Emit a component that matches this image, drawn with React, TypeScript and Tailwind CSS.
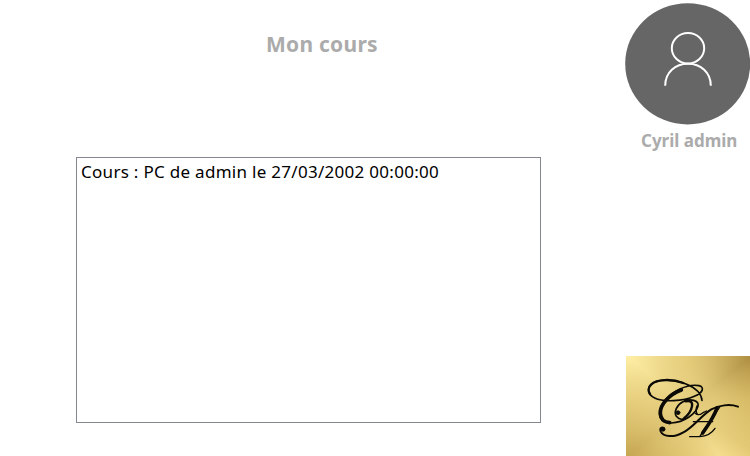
function UserIcon() {
  return (
    <svg className="block h-[125px] w-[130px] shrink-0" viewBox="0 0 130 125" aria-hidden="true">
      <ellipse cx="67.7" cy="63.8" rx="62.5" ry="60.6" fill="#666666" />
      <g fill="none" stroke="#ffffff" strokeWidth="2">
        <ellipse cx="68" cy="48.3" rx="16.2" ry="15.2" />
        <path d="M45.2 85.7C45.2 72.7 55.2 63.7 68 63.7S90.8 72.7 90.8 85.7" />
      </g>
    </svg>
  );
}

function Monogram() {
  return (
    <svg
      className="block h-[100px] w-[124px]"
      viewBox="18 18 372 300"
      preserveAspectRatio="none"
      fill="none"
      stroke="#0c0a06"
      strokeLinecap="round"
      strokeLinejoin="round"
      aria-hidden="true"
    >
      <path strokeWidth="5" d="M246 151C244 132 228 114 198 102C165 88 118 86 96 101C80 113 83 134 104 144C130 157 190 154 223 139C250 128 254 111 237 107C205 100 152 124 130 158C107 194 121 221 154 219C193 217 227 192 234 169C238 150 210 145 189 155C170 164 161 187 169 199Q181 214 196 204" />
      <path strokeWidth="7" d="M190 99C156 86 110 87 94 103C84 112 84 124 90 132" />
      <path strokeWidth="11" d="M184 120C149 133 119 163 121 190C122 207 133 217 149 218" />
      <path strokeWidth="7" d="M197 154Q219 149 216 169Q212 190 193 204" />
      <circle cx="174" cy="188" r="6" fill="#0c0a06" strokeWidth="2" />
      <path strokeWidth="6" d="M354 170C329 161 296 166 274 178C244 196 220 232 190 247C161 264 130 261 122 244C117 232 130 229 133 237" />
      <circle cx="129" cy="238" r="7" fill="#0c0a06" stroke="none" />
      <path strokeWidth="11" d="M291 174C283 198 265 225 248 249" />
      <path strokeWidth="4" d="M209 260H239Q270 258 285 235M239 260L300 170M220 215H278M226 190Q235 199 249 188L260 183M231 167Q225 181 232 192" />
    </svg>
  );
}

export default function App() {
  return (
    <main className="flex h-[456px] w-[750px] overflow-hidden bg-white font-['Noto_Sans',sans-serif]">
      <section className="flex w-[620px] shrink-0 flex-col pl-[76px]">
        <h1 className="mt-8 ml-[190px] h-6 w-[112px] whitespace-nowrap text-[21px] leading-6 font-bold tracking-[0.25px] text-[#ababab]">
          Mon cours
        </h1>
        <div className="mt-[101px] h-[266px] w-[465px] border border-[#828790] pt-[3px] pl-[4px]">
          <p className="whitespace-nowrap text-[17px] leading-[22px] tracking-[0.29px] text-black">
            Cours : PC de admin le 27/03/2002 00:00:00
          </p>
        </div>
      </section>
      <aside className="flex w-[130px] shrink-0 flex-col">
        <UserIcon />
        <p className="mt-[5px] ml-[21px] whitespace-nowrap text-[17px] leading-[22px] font-bold text-[#ababab]">
          Cyril admin
        </p>
        <div className="mt-auto ml-1.5 h-[100px] w-[124px] bg-[radial-gradient(circle_at_50%_50%,#e6cf80_0%,#e6cf80cc_35%,#e6cf8000_100%),conic-gradient(from_0deg_at_50%_50%,#e2c873_0deg,#ae8e40_52deg,#d2b45c_85deg,#e3c873_125deg,#fce496_148deg,#dcc067_185deg,#c5a550_230deg,#e6cd7a_275deg,#fff0a6_310deg,#e2c873_360deg)]">
          <Monogram />
        </div>
      </aside>
    </main>
  );
}
